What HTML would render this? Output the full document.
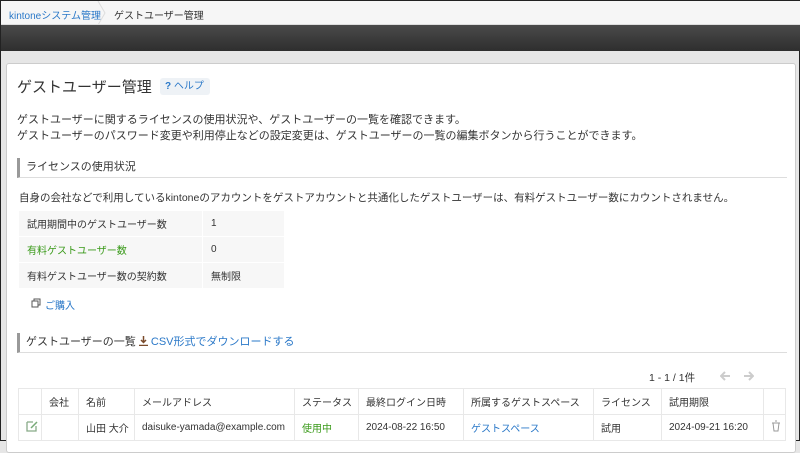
<!DOCTYPE html><html><head><meta charset="utf-8"><style>
*{box-sizing:border-box;margin:0;padding:0}
body{width:800px;height:441px;overflow:hidden;background:#e6e6e6;font-family:"Liberation Sans","Noto Sans CJK JP",sans-serif;font-size:11px;color:#333;position:relative;border:1px solid #222}
.a{position:absolute;white-space:nowrap}
.bc{position:absolute;left:0;top:0;width:800px;height:24px;background:#f6f6f6;border-bottom:1px solid #ddd}
.dk{position:absolute;left:0;top:24px;width:800px;height:26px;background:linear-gradient(#4a4a4a,#2e2e2e)}
.pn{position:absolute;left:5px;top:62px;width:790px;height:390px;background:#fff;border:1px solid #ccc;border-radius:3px}
.blue{color:#2a78c8}.green{color:#3a9a1a}
.sh{position:absolute;left:16px;width:770px;height:20px;border-left:3px solid #999;border-bottom:1px solid #ddd;padding-left:6px;line-height:18px;font-size:11px}
table{border-collapse:collapse;position:absolute;table-layout:fixed}
.lt td{background:#f7f7f7;border:1px solid #fff;height:26px;padding-left:8px;font-size:10px}
.gt td{border:1px solid #e8e8e8;height:26px;padding-left:7px;font-size:10px;white-space:nowrap;overflow:hidden}
</style></head><body>
<div class="bc"></div>
<div class="a blue" style="left:8px;top:6px;font-size:10px">kintoneシステム管理</div>
<svg class="a" style="left:96px;top:0" width="10" height="24"><path d="M1 0 L8 12 L1 24" fill="none" stroke="#ddd"/></svg>
<div class="a" style="left:113px;top:6px;font-size:10px">ゲストユーザー管理</div>
<div class="dk"></div>
<div class="pn"></div>
<div class="a" style="left:16px;top:75px;font-size:15px;color:#333">ゲストユーザー管理</div>
<div class="a blue" style="left:159px;top:77px;width:50px;height:17px;background:#eef2f6;border-radius:3px;font-size:10px;line-height:17px;padding-left:5px"><b>?</b> ヘルプ</div>
<div class="a" style="left:16px;top:110px;font-size:11px">ゲストユーザーに関するライセンスの使用状況や、ゲストユーザーの一覧を確認できます。</div>
<div class="a" style="left:16px;top:126px;font-size:11px">ゲストユーザーのパスワード変更や利用停止などの設定変更は、ゲストユーザーの一覧の編集ボタンから行うことができます。</div>
<div class="sh" style="top:157px">ライセンスの使用状況</div>
<div class="a" style="left:18px;top:189px;font-size:10.5px">自身の会社などで利用しているkintoneのアカウントをゲストアカウントと共通化したゲストユーザーは、有料ゲストユーザー数にカウントされません。</div>
<table class="lt" style="left:17px;top:209px;width:267px"><tr><td style="width:184px">試用期間中のゲストユーザー数</td><td>1</td></tr><tr><td class="green">有料ゲストユーザー数</td><td>0</td></tr><tr><td>有料ゲストユーザー数の契約数</td><td>無制限</td></tr></table>
<svg class="a" style="left:30px;top:297px" width="10" height="10"><rect x="3" y="1" width="6" height="6" fill="none" stroke="#555"/><rect x="1" y="3" width="6" height="6" fill="#fff" stroke="#555"/></svg>
<div class="a blue" style="left:44px;top:296px;font-size:10px">ご購入</div>
<div class="sh" style="top:332px">ゲストユーザーの一覧 <svg width="9" height="10" style="vertical-align:-1px"><path d="M4.5 0v6M2 4l2.5 2.5L7 4M0 9.5h9" fill="none" stroke="#7a4a2a" stroke-width="1.5"/></svg> <span class="blue">CSV形式でダウンロードする</span></div>
<div class="a" style="left:648px;top:369px;font-size:10.5px">1 - 1 / 1件</div>
<svg class="a" style="left:719px;top:370px" width="34" height="10"><path d="M10 5H1M5 1L1 5l4 4M24 5h9M29 1l4 4-4 4" fill="none" stroke="#ccc" stroke-width="2"/></svg>
<table class="gt" style="left:17px;top:387px;width:768px">
<tr><td style="width:23px"></td><td style="width:37px">会社</td><td style="width:56px">名前</td><td style="width:160px">メールアドレス</td><td style="width:64px">ステータス</td><td style="width:105px">最終ログイン日時</td><td style="width:130px">所属するゲストスペース</td><td style="width:68px">ライセンス</td><td style="width:102px">試用期限</td><td></td></tr>
<tr><td><svg width="12" height="12"><path d="M1 2h6M1 2v9h9V6" fill="none" stroke="#8a8" stroke-width="1.3"/><path d="M5 8l6-6" stroke="#7a7" stroke-width="1.5"/></svg></td><td></td><td>山田 大介</td><td>daisuke-yamada@example.com</td><td class="green">使用中</td><td>2024-08-22 16:50</td><td class="blue">ゲストスペース</td><td>試用</td><td>2024-09-21 16:20</td><td><svg width="10" height="12"><path d="M1 3h8M4 1h2M2 3l1 8h4l1-8" fill="none" stroke="#999"/></svg></td></tr>
</table>
</body></html>
